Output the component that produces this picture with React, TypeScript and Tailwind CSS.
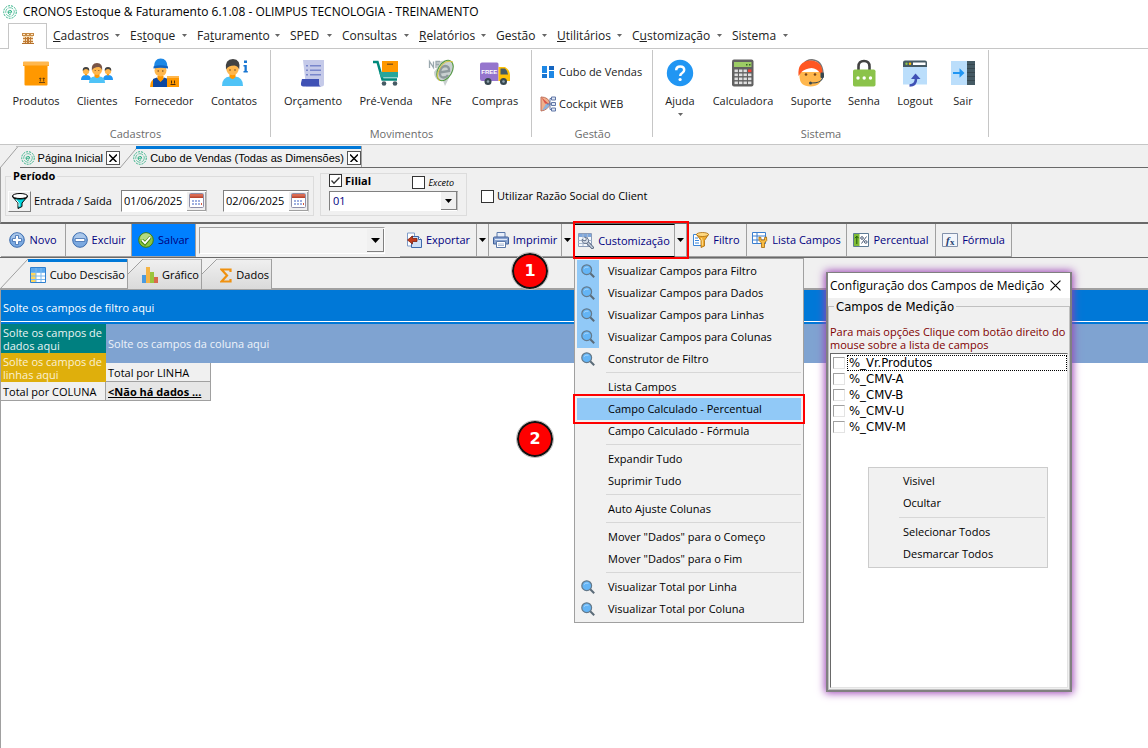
import type { ReactNode } from 'react';

const menus = [
  { pre: '', key: 'C', post: 'adastros', width: 'w-[77px]' },
  { pre: 'Es', key: 't', post: 'oque', width: 'w-[67px]' },
  { pre: 'Fa', key: 't', post: 'uramento', width: 'w-[93px]' },
  { pre: 'SPED', key: '', post: '', width: 'w-[52px]' },
  { pre: 'Consultas', key: '', post: '', width: 'w-[77px]' },
  { pre: '', key: 'R', post: 'elatórios', width: 'w-[77px]' },
  { pre: 'Gestão', key: '', post: '', width: 'w-[61px]' },
  { pre: '', key: 'U', post: 'tilitários', width: 'w-[75px]' },
  { pre: 'C', key: 'u', post: 'stomização', width: 'w-[100px]' },
  { pre: 'Sistema', key: '', post: '', width: 'w-[66px]' },
];

const customizeMenu = [
  [
    { label: 'Visualizar Campos para Filtro', icon: true, on: true },
    { label: 'Visualizar Campos para Dados', icon: true, on: true },
    { label: 'Visualizar Campos para Linhas', icon: true, on: true },
    { label: 'Visualizar Campos para Colunas', icon: true, on: true },
    { label: 'Construtor de Filtro', icon: true },
  ],
  [
    { label: 'Lista Campos' },
    { label: 'Campo Calculado - Percentual', active: true },
    { label: 'Campo Calculado - Fórmula' },
  ],
  [{ label: 'Expandir Tudo' }, { label: 'Suprimir Tudo' }],
  [{ label: 'Auto Ajuste Colunas' }],
  [{ label: 'Mover "Dados" para o Começo' }, { label: 'Mover "Dados" para o Fim' }],
  [
    { label: 'Visualizar Total por Linha', icon: true },
    { label: 'Visualizar Total por Coluna', icon: true },
  ],
] as { label: string; icon?: boolean; on?: boolean; active?: boolean }[][];

const measures = ['%_Vr.Produtos', '%_CMV-A', '%_CMV-B', '%_CMV-U', '%_CMV-M'];

/* ---------- icons ---------- */

function LogoIcon() {
  return (
    <svg viewBox="0 0 14 14" className="w-[14px] h-[14px] shrink-0" fill="none" stroke="#2fb085">
      <circle cx="7" cy="7" r="6.300" strokeWidth="1" strokeDasharray="2 1" />
      <circle cx="7" cy="7" r="4.300" strokeWidth=".7" strokeDasharray="5 1" />
      <path d="M5 7.200h3.800a1.900 1.900 0 1 0-.7 1.600" strokeWidth="1" />
    </svg>
  );
}

function Caret({ color = 'text-black', size = 'w-[7px] h-[4px]' }: { color?: string; size?: string }) {
  return (
    <svg viewBox="0 0 8 4" className={`${size} ${color} shrink-0`} preserveAspectRatio="none">
      <path d="M0 0h8L4 4z" fill="currentColor" />
    </svg>
  );
}

function HomeIcon() {
  return (
    <svg viewBox="0 0 12 11" className="w-[12px] h-[11px]">
      <path d="M0 0h12v3H0z" fill="#c68a45" />
      <path d="M1 3h10v8H1z" fill="#f3d9b1" />
      <path d="M1 1h2v1H1zM5 1h2v1H5zM9 1h2v1H9z" fill="#ffe9c9" />
      <path d="M1 5h10v1H1zM1 8h10v1H1zM3 4h1v7H3zM5 4h2v7H5zM8 4h1v7H8z" fill="#c07b35" />
      <path d="M0 10h12v1H0z" fill="#b4702c" />
    </svg>
  );
}

function BoxIcon() {
  return (
    <svg viewBox="0 0 28 28" className="w-7 h-7">
      <path d="M2.500 7h23v18.500a1 1 0 0 1-1 1h-21a1 1 0 0 1-1-1z" fill="#ff9800" />
      <path d="M1 3.500a1 1 0 0 1 1-1h24a1 1 0 0 1 1 1V7H1z" fill="#ffb74d" />
      <path d="M1 6h26v1H1z" fill="#ffa726" />
      <path d="M17 23.500h6M18.300 22.500v-3.500M21.700 22.500v-3.500M17.300 20l1-1.200 1 1.200M20.700 20l1-1.200 1 1.200" stroke="#5d3a10" strokeWidth=".9" fill="none" />
    </svg>
  );
}

function PeopleIcon() {
  return (
    <svg viewBox="0 0 32 28" className="w-8 h-7">
      {[5, 27].map((x) => (
        <g key={x}>
          <path d={`M${x - 5} 21q0-5 5-5t5 5z`} fill="#2196f3" />
          <circle cx={x} cy="12" r="3.200" fill="#ffb74d" />
          <path d={`M${x - 3.2} 12q-.5-4 3.200-4t3.200 4q-1.500-2-3.200-2t-3.200 2z`} fill="#424242" />
          <path d={`M${x - 1.5} 15h3l-1.500 2z`} fill="#ff9800" />
        </g>
      ))}
      <path d="M8 24q0-6 5.500-6.500h5q5.500.5 5.500 6.500z" fill="#4fc3f7" />
      <path d="M13.500 15h5v2.500q-2.500 3-5 0z" fill="#ff9800" />
      <circle cx="16" cy="11" r="5" fill="#ffb74d" />
      <path d="M10.800 11.500Q10 4 16 4t5.200 7.500Q20 8 17.500 8q-5 0-6.700 3.500z" fill="#795548" />
      <circle cx="14.200" cy="11.500" r=".6" fill="#784719" />
      <circle cx="17.800" cy="11.500" r=".6" fill="#784719" />
    </svg>
  );
}

function WorkerIcon() {
  return (
    <svg viewBox="0 0 30 30" className="w-[30px] h-[30px]">
      <path d="M1 29q0-8 7-9h7q7 1 7 9z" fill="#ff9800" />
      <path d="M4 21l4-1.500 3.500 4 3.500-4 4 1.500V29H4z" fill="#0d47a1" />
      <path d="M8.500 18h6v3l-3 3-3-3z" fill="#ff9800" />
      <circle cx="11.500" cy="12.500" r="6" fill="#ffb74d" />
      <path d="M5 9q0-8.500 6.700-8.500T18.500 9z" fill="#1e88e5" />
      <path d="M4.500 8.500q7-2.500 14.500 0v2q-7.500-1.500-14.500 0z" fill="#1565c0" />
      <circle cx="9.200" cy="13" r=".8" fill="#784719" />
      <circle cx="13.800" cy="13" r=".8" fill="#784719" />
      <path d="M18 18h12v11H18z" fill="#ff9800" />
      <path d="M18 18h12v2H18z" fill="#ffb74d" />
      <path d="M21.500 26.500h5M22.500 25.500v-3M25.500 25.500v-3" stroke="#4e2f0c" fill="none" />
    </svg>
  );
}

function ContactIcon() {
  return (
    <svg viewBox="0 0 30 30" className="w-[30px] h-[30px]">
      <path d="M3 28q0-9 8-9.500h5q8 .5 8 9.500z" fill="#4fc3f7" />
      <path d="M10.500 16h6v3q-3 4-6 0z" fill="#ff9800" />
      <circle cx="13.500" cy="11" r="6.200" fill="#ffb74d" />
      <path d="M7 11.500Q5.500 1 14 1q8 .5 6.200 10.500Q19 8 15.500 7.500 9 7.500 7 11.500z" fill="#424242" />
      <circle cx="11" cy="12" r=".8" fill="#784719" />
      <circle cx="16" cy="12" r=".8" fill="#784719" />
      <path d="M25 2.500h3v2.500h-3zM24.500 7h3.300v6h1v1.500h-4.300V13h1V8.500h-1z" fill="#1976d2" />
    </svg>
  );
}

function InvoiceIcon() {
  return (
    <svg viewBox="0 0 28 28" className="w-7 h-7">
      <path d="M4 1h21v24a2.500 2.500 0 0 1-2.500 2.500H7z" fill="#c5cae9" />
      <path d="M3 20h17v4.500q0 3 2.500 3H4.500Q1.500 27.500 2 24z" fill="#3f51b5" />
      <path d="M7 6h2v1.500H7zM7 10.500h2V12H7zM7 15h2v1.500H7zM11 6h11v1.500H11zM11 10.500h11V12H11zM11 15h11v1.500H11z" fill="#7986cb" />
    </svg>
  );
}

function CartIcon() {
  return (
    <svg viewBox="0 0 28 28" className="w-7 h-7">
      <path d="M10 2h16v12H10z" fill="#ff9800" />
      <path d="M15 4.500h6V6h-6z" fill="#8a5a1a" />
      <path d="M1 3h4.500l5 17.500H25" stroke="#00897b" strokeWidth="2.500" fill="none" />
      <path d="M7 13h19v5.500H9z" fill="#26a69a" />
      <circle cx="12" cy="24.500" r="2.300" fill="#455a64" />
      <circle cx="23" cy="24.500" r="2.300" fill="#455a64" />
    </svg>
  );
}

function NfeIcon() {
  return (
    <svg viewBox="0 0 28 28" className="w-7 h-7" fill="none">
      <path d="M8 3q10-3 16 0l2 4-1 6q-4 4-5 8l-3 6-2-5h-4q-5-3-5-9l3-4z" fill="#c9d0d0" />
      <path d="M1.500 9V2.500l4 6v-6M8 9V2.500h4M8 5.500h3" stroke="#9aa8ae" strokeWidth="1.300" />
      <path d="M11.500 13.500l9.500-1.500q.5-5-4-5-4 .5-5 5.500-.8 6 3.500 6 3 0 4.500-2.500" stroke="#8e999c" strokeWidth="2.400" />
      <ellipse cx="17" cy="11.500" rx="7" ry="11" transform="rotate(30 17 11.500)" stroke="#4f9a3d" strokeWidth="1" />
      <path d="M12 22Q7 18 12 9t13-6" stroke="#dcc73f" />
    </svg>
  );
}

function TruckIcon() {
  return (
    <svg viewBox="0 0 32 28" className="w-8 h-7">
      <path d="M1 5.500a2 2 0 0 1 2-2h15a1.500 1.500 0 0 1 1.500 1.500v17H3a2 2 0 0 1-2-2z" fill="#9575cd" />
      <path d="M19.500 8H26q5 3 5 8v6H19.500z" fill="#ffc107" />
      <path d="M21.500 9.500H26q3 2.500 3 6h-7.500z" fill="#455a64" />
      <circle cx="9" cy="22.500" r="3.500" fill="#37474f" />
      <circle cx="24.500" cy="22.500" r="3.500" fill="#37474f" />
      <circle cx="9" cy="22.500" r="1.300" fill="#90a4ae" />
      <circle cx="24.500" cy="22.500" r="1.300" fill="#90a4ae" />
      <text x="10.300" y="14.500" textAnchor="middle" fontSize="6" fontWeight="700" fill="#fff" fontFamily="Liberation Sans, sans-serif">FREE</text>
    </svg>
  );
}

function DashboardIcon() {
  return (
    <svg viewBox="0 0 12 12" className="w-[12px] h-[12px]">
      <path d="M0 0h5v7H0zM7 5h5v7H7z" fill="#1e88e5" />
      <path d="M7 0h5v4H7z" fill="#1565c0" />
      <path d="M0 8h5v4H0z" fill="#1976d2" />
    </svg>
  );
}

function CockpitIcon() {
  return (
    <svg viewBox="0 0 16 16" className="w-4 h-4">
      <path d="M1 1q8 0 9 7-2 6-9 7z" fill="#f0b08c" stroke="#c0705a" />
      <path d="M1.500 1.500L9 8l-4-.500z" fill="#d9534a" />
      <path d="M2 14.500L6 8h4q-2 5-8 6.500z" fill="#8fb2dc" />
      <path d="M7 8h3M10 2.500v11M10 2.500h1.500M10 8h1.500M10 13.500h1.500" stroke="#6076a6" fill="none" />
      <path d="M11.500 1h4v3h-4zM11.500 6.500h4v3h-4zM11.500 12h4v3h-4z" fill="#dfe7f5" stroke="#6076a6" />
    </svg>
  );
}

function HelpIcon() {
  return (
    <svg viewBox="0 0 28 28" className="w-7 h-7">
      <circle cx="14" cy="14" r="13.200" fill="#2196f3" />
      <path d="M10.200 11.200q0-3.800 4-3.800t4 3.600q0 1.700-2 3-2 1.200-2 3" stroke="#fff" strokeWidth="2.500" fill="none" />
      <circle cx="14.100" cy="20.500" r="1.600" fill="#fff" />
    </svg>
  );
}

function CalculatorIcon() {
  const rows = [12, 16, 20, 24];
  const cols = [5.5, 10, 14.5, 19];
  return (
    <svg viewBox="0 0 28 28" className="w-7 h-7">
      <rect x="3" y=".5" width="21.500" height="27" rx="2" fill="#616161" />
      <path d="M5 3h17.500v5H5z" fill="#9ccc65" />
      <path d="M17 5h1.500v1.500H17zM20 5h1.500v1.500H20z" fill="#33691e" />
      {rows.map((y) =>
        cols.map((x) => <rect key={`${x}-${y}`} x={x} y={y - 1.5} width="3.400" height="2.600" fill={x === 19 && y === 12 ? '#f44336' : '#e0e0e0'} />),
      )}
    </svg>
  );
}

function SupportIcon() {
  return (
    <svg viewBox="0 0 28 28" className="w-7 h-7">
      <path d="M7 5Q9 .8 15 .8 25 1.500 26 14" fill="none" stroke="#757575" strokeWidth="1.400" />
      <path d="M2.500 13v4q0 10.500 11 10.500T24.500 17v-4z" fill="#ffb74d" />
      <path d="M1.500 17Q0 2 13.500 1.500 26 2 25.500 15l-3-1.500q-2.500-4-8-4.500-6 .5-9.500 3.500z" fill="#ff5722" />
      <circle cx="9" cy="15.500" r="1.300" fill="#784719" />
      <circle cx="18" cy="15.500" r="1.300" fill="#784719" />
      <rect x="23.500" y="13.500" width="3.500" height="5.500" rx="1" fill="#37474f" />
      <path d="M25.500 19q-1 5-11 5" stroke="#37474f" strokeWidth="1.200" fill="none" />
      <circle cx="13.500" cy="24" r="1.500" fill="#37474f" />
    </svg>
  );
}

function LockIcon() {
  return (
    <svg viewBox="0 0 28 28" className="w-7 h-7">
      <path d="M8.500 12V7.500q0-5.500 5.500-5.500t5.500 5.500V12" fill="none" stroke="#424242" strokeWidth="2.600" />
      <rect x="3" y="10.500" width="22.500" height="17" rx="1.800" fill="#8bc34a" />
      <circle cx="8" cy="19" r="1.700" fill="#fff" />
      <circle cx="14.200" cy="19" r="1.700" fill="#fff" />
      <circle cx="20.500" cy="19" r="1.700" fill="#fff" />
    </svg>
  );
}

function LogoutIcon() {
  return (
    <svg viewBox="0 0 28 28" className="w-7 h-7">
      <path d="M2 7h24v18.500H2z" fill="#bbdefb" />
      <path d="M2 3.500a2 2 0 0 1 2-2h20a2 2 0 0 1 2 2V8H2z" fill="#455a64" />
      <rect x="12" y="3.500" width="12.500" height="2.500" fill="#fff" />
      <circle cx="5.500" cy="4.800" r="1.200" fill="#8bc34a" />
      <circle cx="9" cy="4.800" r="1.200" fill="#ffc107" />
      <path d="M8.500 26.500q6.500 0 6.500-7" fill="none" stroke="#3f51b5" strokeWidth="2.600" />
      <path d="M10 20l4.500-5.500L19.500 20z" fill="#3f51b5" />
    </svg>
  );
}

function ExitIcon() {
  return (
    <svg viewBox="0 0 28 28" className="w-7 h-7">
      <path d="M2 2h16v24H2z" fill="#bbdefb" />
      <path d="M18 2h8v24h-8z" fill="#455a64" />
      <path d="M18 5.500h8M18 9.500h8M18 13.500h8M18 17.500h8M18 21.500h8" stroke="#37474f" />
      <path d="M4 13h6.500V9.200l5 4.800-5 4.800V15H4z" fill="#2196f3" />
    </svg>
  );
}

function FunnelIcon() {
  return (
    <svg viewBox="0 0 16 16" className="w-4 h-4">
      <ellipse cx="8" cy="3" rx="7.500" ry="2.500" fill="#fff" stroke="#000" />
      <path d="M.5 3.500L6 10v5.500l4-2V10l5.500-6.500Q15 6 8 6T.5 3.500z" fill="#00d8e0" stroke="#000" />
      <path d="M4 6.500l3 4v3" stroke="#fff" fill="none" />
    </svg>
  );
}

function CalendarIcon() {
  return (
    <svg viewBox="0 0 15 15" className="w-[15px] h-[15px]">
      <rect x=".5" y=".5" width="14" height="14" rx="1" fill="#fff" stroke="#8f8fa8" />
      <path d="M1 1h13v4H1z" fill="#d96a52" />
      <path d="M1 3.500h13V5H1z" fill="#b9472f" />
      <path d="M3 7h2v2H3zM6 7h2v2H6zM9 7h2v2H9zM3 10h2v2H3zM6 10h2v2H6zM9 10h2v2H9z" fill="#9fb0e0" />
      <path d="M12 10h1v2h-1z" fill="#d4573d" />
    </svg>
  );
}

function RoundIcon({ kind }: { kind: 'plus' | 'minus' | 'check' }) {
  const green = kind === 'check';
  return (
    <svg viewBox="0 0 16 16" className="w-4 h-4 shrink-0">
      <circle cx="8" cy="8" r="7.300" fill={green ? '#8cc63f' : '#7ba9e0'} stroke={green ? '#3f7d12' : '#3c6cae'} />
      <path d="M2 7a6 6 0 0 1 12 0q-6 2-12 0z" fill="#fff" opacity=".35" />
      {kind === 'plus' && <path d="M6.500 3.500h3v3h3v3h-3v3h-3v-3h-3v-3h3z" fill="#fff" stroke="#3c6cae" strokeWidth=".8" />}
      {kind === 'minus' && <path d="M3.200 6.500h9.600v3H3.200z" fill="#fff" stroke="#3c6cae" strokeWidth=".8" />}
      {kind === 'check' && (
        <>
          <path d="M3.800 8.200l3.200 3.300 5.500-6.500" fill="none" stroke="#3f7d12" strokeWidth="3.400" />
          <path d="M4 8.200l3 3 5.200-6" fill="none" stroke="#fff" strokeWidth="1.800" />
        </>
      )}
    </svg>
  );
}

function ExportIcon() {
  return (
    <svg viewBox="0 0 16 16" className="w-4 h-4 shrink-0">
      <path d="M1.500 1h7v13h-7z" fill="#fff" stroke="#7f9cc9" />
      <path d="M5.500 4.500h7l3 3v8h-10z" fill="#cfe0f7" stroke="#3f69ab" />
      <path d="M12.500 4.500v3h3" fill="#fff" stroke="#3f69ab" />
      <path d="M1.500 8l5-4v2.500h4.500v3H6.500V12z" fill="#c33b1c" stroke="#7d1f0c" strokeWidth=".8" />
    </svg>
  );
}

function PrinterIcon() {
  return (
    <svg viewBox="0 0 16 16" className="w-4 h-4 shrink-0">
      <path d="M4 .500h8V6H4z" fill="#e9f0fb" stroke="#5b79aa" />
      <path d="M1.500 5h13q1 0 1 1v6H.500V6q0-1 1-1z" fill="#88a3d0" stroke="#40609a" />
      <path d="M2 7.500h12" stroke="#dfe8f8" />
      <path d="M3.500 9.500h9v6h-9z" fill="#fff" stroke="#5b79aa" />
      <path d="M5 12h6M5 13.500h6" stroke="#a9bad6" />
    </svg>
  );
}

function ToolTableIcon() {
  return (
    <svg viewBox="0 0 16 16" className="w-4 h-4 shrink-0">
      <path d="M.500 .500h13v13H.500z" fill="#f4f7fb" stroke="#8a9bb8" />
      <path d="M1 1h12v3H1z" fill="#7fa8dd" />
      <path d="M.500 7.500h13M.500 10.500h13M5 1v12M9.500 1v12" stroke="#a9b8cf" />
      <path d="M14.300 14.500L9 9" stroke="#4e5d76" strokeWidth="3.200" strokeLinecap="round" />
      <path d="M14.300 14.500L9 9" stroke="#c3cddd" strokeWidth="1.600" strokeLinecap="round" />
      <path d="M6.500 4l1.800 1.800-.5 1.700-1.900.3L4.200 6.200Q3.600 9.500 6 10.300q3 .8 4.500-1.300Q11.500 5 6.500 4z" fill="#d5dce8" stroke="#4e5d76" strokeWidth=".8" />
    </svg>
  );
}

function FilterTableIcon() {
  return (
    <svg viewBox="0 0 16 16" className="w-4 h-4 shrink-0">
      <path d="M.500 2.500h10v11H.500z" fill="#fff" stroke="#3b86d8" />
      <path d="M2 6h3M2 8.500h4M2 11h4" stroke="#3b86d8" />
      <path d="M3.500 2.500L8 8.500v7l3.500-1.500V8.500L15.500 2.500q-6 2.500-12 0z" fill="#f0ac2e" stroke="#a9690a" strokeWidth=".8" />
      <path d="M8.500 6l.8 3v4.500" stroke="#ffe095" fill="none" />
      <ellipse cx="9.500" cy="2.500" rx="6" ry="2" fill="#ffd980" stroke="#a9690a" strokeWidth=".8" />
    </svg>
  );
}

function FieldListIcon() {
  return (
    <svg viewBox="0 0 16 16" className="w-4 h-4 shrink-0">
      <path d="M.500 .500h13v11H.500z" fill="#fff" stroke="#3b7fd0" />
      <path d="M1 4h12M1 8h12M5 1v10" stroke="#3b7fd0" />
      <path d="M9.500 15.500v-4.500Q6 9 7 5l2 .5v2.500h3.500V5.500l2-.5Q16 9 12.500 11v4.500z" fill="#f6bd45" stroke="#a9690a" strokeWidth=".8" />
    </svg>
  );
}

function PercentIcon() {
  return (
    <svg viewBox="0 0 16 14" className="w-4 h-[14px] shrink-0">
      <path d="M.500 .500h15v13H.500z" fill="#fff" stroke="#5d7b95" />
      <path d="M1 1h5.500v12H1z" fill="#7fbb35" />
      <path d="M3.800 11V3.500M2 5.200l1.800-2 1.800 2" stroke="#1d5a08" fill="none" />
      <circle cx="9" cy="5" r="1.300" fill="none" stroke="#4a5a75" />
      <circle cx="12.800" cy="9" r="1.300" fill="none" stroke="#4a5a75" />
      <path d="M8.500 10.500l5-7" stroke="#4a5a75" />
    </svg>
  );
}

function FxIcon() {
  return (
    <svg viewBox="0 0 16 14" className="w-4 h-[14px] shrink-0">
      <path d="M.500 .500h15v13H.500z" fill="#f2f5fb" stroke="#8391ab" />
      <text x="4" y="10.500" fontSize="11" fontStyle="italic" fontWeight="700" fill="#24406f" fontFamily="Liberation Serif, serif">f</text>
      <text x="8" y="12" fontSize="9" fontWeight="700" fill="#24406f" fontFamily="Liberation Serif, serif">x</text>
    </svg>
  );
}

function GridIcon() {
  return (
    <svg viewBox="0 0 16 16" className="w-4 h-4 shrink-0">
      <path d="M.500 .500h15v15H.500z" fill="#fff" stroke="#2f80d0" />
      <path d="M1 1h14v4H1z" fill="#5aa8ee" />
      <path d="M1 6h5v9H1z" fill="#ffd65c" />
      <path d="M1 5.500h14M1 9h14M1 12.500h14M6 1v14M11 1v14" stroke="#7db9ee" />
    </svg>
  );
}

function ChartIcon() {
  return (
    <svg viewBox="0 0 16 16" className="w-4 h-4 shrink-0">
      <path d="M0 8h4v8H0z" fill="#4b9be0" />
      <path d="M4 0h4v16H4z" fill="#f5b445" />
      <path d="M8 5h4v11H8z" fill="#9cc43c" />
      <path d="M12 10h4v6h-4z" fill="#d9694d" />
    </svg>
  );
}

function SigmaIcon() {
  return (
    <svg viewBox="0 0 12 15" className="w-[12px] h-[15px] shrink-0">
      <path d="M10.500 4V1.500H1.500L7 7.500l-5.500 6h9V11" fill="none" stroke="#ef9110" strokeWidth="2.200" />
    </svg>
  );
}

function SearchIcon() {
  return (
    <svg viewBox="0 0 14 14" className="w-[14px] h-[14px]">
      <path d="M9 9l4.200 4.200" stroke="#5b6b78" strokeWidth="2" />
      <circle cx="5.700" cy="5.700" r="4.900" fill="#64b5f6" stroke="#64798a" strokeWidth="1.200" />
      <path d="M3 4.500Q4.500 2.500 7.500 3.200" stroke="#a9d8ff" fill="none" />
    </svg>
  );
}

function CloseIcon({ className }: { className: string }) {
  return (
    <svg viewBox="0 0 10 10" className={className} fill="none" stroke="#000">
      <path d="M.500 .500l9 9M9.500 .500l-9 9" />
    </svg>
  );
}

/* ---------- building blocks ---------- */

function RibbonItem({ icon, label, width, drop }: { icon: ReactNode; label: string; width: string; drop?: boolean }) {
  return (
    <button className={`${width} flex flex-col items-center shrink-0`}>
      <span className="h-[30px] flex items-center">{icon}</span>
      <span className="mt-[4px] leading-[18px] whitespace-nowrap">{label}</span>
      {drop && <span className="pt-[3px]"><Caret color="text-[#666]" size="w-[5px] h-[3px]" /></span>}
    </button>
  );
}

function RibbonGroup({ label, width, children }: { label: string; width: string; children: ReactNode }) {
  return (
    <section className={`${width} h-[92px] mt-px flex flex-col shrink-0 relative`}>
      <div className="flex-1 flex pt-[8px]">{children}</div>
      <h2 className="text-center text-[#6b6b6b] leading-[16px]">{label}</h2>
      <span className="absolute right-0 top-0 h-[87px] border-r border-[#c6c6c6]" />
    </section>
  );
}

function ToolButton({ icon, label, width, on }: { icon: ReactNode; label: string; width: string; on?: boolean }) {
  return (
    <button
      className={`${width} ${on ? 'bg-[#0080ff]' : 'bg-[#f0f0f0]'} h-[33px] flex items-center justify-center gap-[4px] shrink-0 border-r border-b border-[#a0a0a0] text-[#000080] whitespace-nowrap`}
    >
      {icon}
      {label}
    </button>
  );
}

function DropButton({ label }: { label: string }) {
  return (
    <button aria-label={label} className="w-[12px] h-[33px] flex items-center justify-center shrink-0 border-r border-b border-[#a0a0a0]">
      <Caret />
    </button>
  );
}

function DateField({ label, value }: { label: string; value: string }) {
  return (
    <div className="w-[86px] h-[22px] flex items-center justify-between bg-white border border-t-[#808080] border-l-[#808080] border-b-white border-r-[#c0c0c0]">
      <input aria-label={label} defaultValue={value} className="w-[62px] pl-[2px] bg-transparent outline-none" />
      <button aria-label="Calendário" className="w-[19px] h-[19px] flex items-center justify-center bg-[#f0f0f0] border-r border-b border-[#a0a0a0] shrink-0">
        <CalendarIcon />
      </button>
    </div>
  );
}

function Check({ id, checked }: { id: string; checked?: boolean }) {
  return (
    <span className="relative flex shrink-0">
      <input id={id} type="checkbox" defaultChecked={checked} className="peer appearance-none w-[13px] h-[13px] bg-white border border-[#333]" />
      <svg viewBox="0 0 13 13" className="hidden peer-checked:block absolute inset-0 pointer-events-none" fill="none" stroke="#333" strokeWidth="1.300">
        <path d="M2.500 6.500L5 9.200l5.500-5.700" />
      </svg>
    </span>
  );
}

function StepBadge({ n, place }: { n: number; place: string }) {
  return (
    <span className={`${place} absolute z-20 w-[36px] h-[36px] rounded-full bg-[#fe0000] border-2 border-[#111] outline-1 outline-[#bbb] flex items-center justify-center text-white text-[16px] font-bold font-['DejaVu_Sans',sans-serif]`}>
      {n}
    </span>
  );
}

function DocTab({ label, width, active }: { label: string; width: string; active?: boolean }) {
  return (
    <div className={`${width} relative h-[22px] flex items-center justify-end gap-[3px] font-['Liberation_Sans',sans-serif] text-[11px]`}>
      <svg viewBox="0 0 20 22" className="absolute left-0 top-0 w-[20px] h-[22px]" fill="none">
        <path d="M0 22L18 .500H20V22z" fill="#f0f0f0" />
        <path d="M0 22L18 .500H20" stroke="#a0a0a0" />
      </svg>
      <span className={`absolute left-[16px] right-0 top-0 ${active ? 'h-[3px] bg-[#0078d7]' : 'h-px bg-[#c0c0c0]'}`} />
      <span className="relative flex items-center gap-[3px] pt-px whitespace-nowrap"><LogoIcon />{label}</span>
      <button aria-label={`Fechar ${label}`} className="relative mt-px w-[14px] h-[14px] flex items-center justify-center bg-white border border-[#555]">
        <svg viewBox="0 0 8 8" className="w-2 h-2"><path d="M0 .500l7.500 7.500M8 .500L.500 8" stroke="#000" strokeWidth="1.500" /></svg>
      </button>
    </div>
  );
}

function ViewTab({ icon, label, width, active }: { icon: ReactNode; label: string; width: string; active?: boolean }) {
  return (
    <button className={`${width} relative h-[30px] flex items-center justify-end gap-[4px] pt-[2px] pr-[2px] border-r border-[#a0a0a0] whitespace-nowrap ${active ? '' : 'bg-linear-to-b from-[#f0f0f0] to-[#dadada]'}`}>
      <svg viewBox="0 0 30 30" preserveAspectRatio="none" className={`absolute left-0 top-0 h-[30px] ${active ? 'w-[28px]' : 'w-[15px]'}`} fill="none">
        <path d={active ? 'M0 0H30L0 30z' : 'M0 0H30L0 15z'} fill="#f0f0f0" />
        <path d={active ? 'M0 30L30 0' : 'M0 15L30 0'} stroke="#a0a0a0" vectorEffect="non-scaling-stroke" />
      </svg>
      <span className={`absolute right-0 top-0 ${active ? 'left-[28px] h-[3px] bg-[#0078d7]' : 'left-[15px] h-px bg-[#c0c0c0]'}`} />
      {icon}
      {label}
    </button>
  );
}

function CustomizeMenu() {
  return (
    <ul role="menu" className="absolute z-10 left-0 top-[34px] w-[230px] pt-px pb-[2px] px-[2px] bg-[#f1f1f1] border border-[#a0a0a0] text-black">
      {customizeMenu.map((group, i) => (
        <li key={i}>
          {i > 0 && <hr className="ml-[29px] mt-[2px] mb-[3px] border-[#d7d7d7]" />}
          {group.map((item) => (
            <button
              key={item.label}
              role="menuitem"
              className={`w-full h-[22px] flex items-center text-left whitespace-nowrap ${item.active ? 'bg-[#91c9f7] outline-2 outline-offset-[2px] outline-[#fe0000]' : ''}`}
            >
              <span className={`w-[22px] h-[22px] mr-[9px] flex items-center justify-center shrink-0 ${item.on ? 'bg-[#91c9f7]' : ''}`}>
                {item.icon && <SearchIcon />}
              </span>
              {item.label}
            </button>
          ))}
        </li>
      ))}
    </ul>
  );
}

function MeasureDialog() {
  return (
    <div role="dialog" aria-label="Configuração dos Campos de Medição" className="absolute z-10 left-[826px] top-[272px] w-[246px] h-[420px] flex flex-col bg-[#f0f0f0] border-2 border-t border-[#808080] shadow-[0_0_8px_1px_#9b3fb5]">
      <div className="h-[25px] flex items-center justify-between bg-white pl-[2px] pr-[9px]">
        <span className="whitespace-nowrap text-[12px]">Configuração dos Campos de Medição</span>
        <button aria-label="Fechar"><CloseIcon className="w-[11px] h-[11px]" /></button>
      </div>
      <fieldset className="flex-1 min-w-0 flex flex-col border border-[#c0c0c0] px-px pb-px">
        <legend className="ml-[4px] px-[2px] text-[13px] leading-[17px] font-['DejaVu_Sans_Condensed','DejaVu_Sans',sans-serif]">Campos de Medição</legend>
        <p className="pt-[10px] pb-[2px] leading-[13px] text-[#800000] whitespace-nowrap">
          Para mais opções Clique com botão direito do<br />mouse sobre a lista de campos
        </p>
        <div className="relative flex-1 pt-px bg-white border border-t-[#696969] border-l-[#696969] border-b-[#e3e3e3] border-r-[#e3e3e3] font-['DejaVu_Sans_Condensed','DejaVu_Sans',sans-serif]">
          {measures.map((m, i) => (
            <label key={m} className="h-[16px] flex items-center text-[13px]">
              <input type="checkbox" className="appearance-none w-[12px] h-[12px] mx-[2px] bg-white border border-[#e3e3e3] border-t-[#a0a0a0] border-l-[#a0a0a0] shrink-0" />
              <span className={`flex-1 h-[16px] pl-px border border-dotted leading-[14px] ${i === 0 ? 'border-black' : 'border-transparent'}`}>{m}</span>
            </label>
          ))}
          <ul role="menu" className="absolute left-[37px] top-[113px] w-[180px] py-[2px] px-[2px] bg-[#f1f1f1] border border-[#ccc] font-['Open_Sans','Noto_Sans',sans-serif]">
            {['Visivel', 'Ocultar', '', 'Selecionar Todos', 'Desmarcar Todos'].map((label) =>
              label ? (
                <li key={label}>
                  <button role="menuitem" className="w-full h-[22px] pl-[32px] text-left">{label}</button>
                </li>
              ) : (
                <li key="sep" className="ml-[28px] my-[3px] border-t border-[#d7d7d7]" />
              ),
            )}
          </ul>
        </div>
      </fieldset>
    </div>
  );
}

export default function App() {
  return (
    <div className="relative min-h-screen flex flex-col bg-white overflow-hidden text-[11px] leading-[16px] text-black font-['Open_Sans','Noto_Sans',sans-serif]">
      <header className="h-[23px] flex items-center gap-[6px] pl-[3px]">
        <LogoIcon />
        <h1 className="whitespace-nowrap text-[12px]">CRONOS Estoque &amp; Faturamento 6.1.08 - OLIMPUS TECNOLOGIA - TREINAMENTO</h1>
      </header>

      <nav className="h-[26px] flex text-[12px] text-[#222]">
        <span className="w-[8px] border-b border-[#c6c6c6]" />
        <button aria-label="Início" className="w-[39px] flex items-center justify-center pt-[4px] border border-b-0 border-[#c6c6c6]"><HomeIcon /></button>
        <div className="flex-1 flex items-center pl-[6px] border-b border-[#c6c6c6]">
          {menus.map((m) => (
            <button key={m.pre + m.key + m.post} className={`${m.width} flex items-center justify-between pr-[10px] whitespace-nowrap shrink-0`}>
              <span>{m.pre}<u>{m.key}</u>{m.post}</span>
              <Caret color="text-[#666]" size="w-[5px] h-[3px]" />
            </button>
          ))}
        </div>
      </nav>

      <div className="h-[96px] flex border-b border-[#c6c6c6] text-[#222]">
        <RibbonGroup label="Cadastros" width="w-[271px]">
          <span className="w-[6px]" />
          <RibbonItem icon={<BoxIcon />} label="Produtos" width="w-[60px]" />
          <RibbonItem icon={<PeopleIcon />} label="Clientes" width="w-[62px]" />
          <RibbonItem icon={<WorkerIcon />} label="Fornecedor" width="w-[72px]" />
          <RibbonItem icon={<ContactIcon />} label="Contatos" width="w-[68px]" />
        </RibbonGroup>
        <RibbonGroup label="Movimentos" width="w-[261px]">
          <span className="w-[6px]" />
          <RibbonItem icon={<InvoiceIcon />} label="Orçamento" width="w-[72px]" />
          <RibbonItem icon={<CartIcon />} label="Pré-Venda" width="w-[74px]" />
          <RibbonItem icon={<NfeIcon />} label="NFe" width="w-[37px]" />
          <RibbonItem icon={<TruckIcon />} label="Compras" width="w-[70px]" />
        </RibbonGroup>
        <RibbonGroup label="Gestão" width="w-[121px]">
          <div className="flex flex-col gap-[16px] pt-[6px] pl-[8px]">
            <button className="flex items-center gap-[3px] whitespace-nowrap"><span className="w-4 flex justify-center"><DashboardIcon /></span>Cubo de Vendas</button>
            <button className="flex items-center gap-[3px] whitespace-nowrap"><CockpitIcon />Cockpit WEB</button>
          </div>
        </RibbonGroup>
        <RibbonGroup label="Sistema" width="w-[336px]">
          <span className="w-px" />
          <RibbonItem icon={<HelpIcon />} label="Ajuda" width="w-[52px]" drop />
          <RibbonItem icon={<CalculatorIcon />} label="Calculadora" width="w-[74px]" />
          <RibbonItem icon={<SupportIcon />} label="Suporte" width="w-[62px]" />
          <RibbonItem icon={<LockIcon />} label="Senha" width="w-[44px]" />
          <RibbonItem icon={<LogoutIcon />} label="Logout" width="w-[58px]" />
          <RibbonItem icon={<ExitIcon />} label="Sair" width="w-[38px]" />
        </RibbonGroup>
      </div>

      <main className="flex-1 flex flex-col">
        <div className="h-[23px] flex items-start bg-[#f0f0f0] border-b border-[#696969] pt-px">
          <DocTab label="Página Inicial" width="w-[120px]" />
          <DocTab label="Cubo de Vendas (Todas as Dimensões)" width="w-[241px]" active />
          <span className="h-[21px] border-r border-[#a0a0a0]" />
        </div>

        <div className="h-[56px] flex items-start bg-[#f0f0f0] border-b-2 border-[#696969] border-l border-l-[#a0a0a0] pl-[4px]">
          <fieldset className="w-[309px] h-[48px] flex border border-[#dcdcdc] px-[2px]">
            <legend className="ml-[3px] px-[2px] font-bold">Período</legend>
            <div className="flex items-center h-[30px] pt-[4px]">
              <button aria-label="Filtrar período" className="w-[23px] h-[21px] flex items-center justify-center border-r border-b border-[#808080] border-t border-t-white border-l border-l-white"><FunnelIcon /></button>
              <span className="w-[90px] pl-[3px] whitespace-nowrap">Entrada / Saída</span>
              <DateField label="Entrada" value="01/06/2025" />
              <span className="w-[16px]" />
              <DateField label="Saída" value="02/06/2025" />
            </div>
          </fieldset>
          <fieldset className="w-[147px] h-[43px] ml-[6px] mt-[5px] border border-[#dcdcdc] px-[8px]">
            <div className="h-[17px] flex items-center justify-between">
              <label htmlFor="filial" className="flex items-center gap-[3px] pb-[4px] font-bold"><Check id="filial" checked />Filial</label>
              <label htmlFor="exceto" className="flex items-center gap-[3px] mr-[4px] text-[9px] italic"><Check id="exceto" />Exceto</label>
            </div>
            <div className="relative h-[20px] border border-[#808080] border-b-white border-r-[#c0c0c0] bg-white">
              <select aria-label="Filial" defaultValue="01" className="w-full h-full pl-[3px] appearance-none text-[#000080] outline-none">
                <option>01</option>
              </select>
              <span className="absolute right-0 top-0 w-[16px] h-[18px] flex items-center justify-center bg-[#f0f0f0] border-r border-b border-[#808080] pointer-events-none"><Caret /></span>
            </div>
          </fieldset>
          <label htmlFor="razao" className="flex items-center gap-[3px] ml-[14px] mt-[20px] whitespace-nowrap"><Check id="razao" />Utilizar Razão Social do Client</label>
        </div>

        <div className="relative h-[34px] flex items-start bg-[#f0f0f0] border-b border-[#696969] pl-px">
          <ToolButton icon={<RoundIcon kind="plus" />} label="Novo" width="w-[65px]" />
          <ToolButton icon={<RoundIcon kind="minus" />} label="Excluir" width="w-[66px]" />
          <ToolButton icon={<RoundIcon kind="check" />} label="Salvar" width="w-[64px]" on />
          <div className="relative w-[186px] h-[27px] ml-[3px] mr-[15px] mt-[3px] border border-[#a0a0a0] border-r-white border-b-white bg-[#f4f4f4] shrink-0">
            <select aria-label="Visão" className="w-full h-full appearance-none outline-none"><option></option></select>
            <span className="absolute right-0 top-px w-[17px] h-[23px] flex items-center justify-center bg-[#f0f0f0] border-r border-b border-[#808080] pointer-events-none"><Caret size="w-[9px] h-[5px]" /></span>
          </div>
          <ToolButton icon={<ExportIcon />} label="Exportar" width="w-[77px]" />
          <DropButton label="Opções de exportação" />
          <ToolButton icon={<PrinterIcon />} label="Imprimir" width="w-[73px]" />
          <DropButton label="Opções de impressão" />
          <div className="relative flex shrink-0">
            <ToolButton icon={<ToolTableIcon />} label="Customização" width="w-[101px] border-t border-t-black border-b-black" />
            <DropButton label="Opções de customização" />
            <span className="absolute -left-px -top-[3px] w-[116px] h-[38px] border-2 border-[#fe0000] z-20 pointer-events-none" />
            <CustomizeMenu />
            <StepBadge n={1} place="-left-[62px] top-[29px]" />
            <StepBadge n={2} place="-left-[57px] top-[197px]" />
          </div>
          <ToolButton icon={<FilterTableIcon />} label="Filtro" width="w-[60px]" />
          <ToolButton icon={<FieldListIcon />} label="Lista Campos" width="w-[100px]" />
          <ToolButton icon={<PercentIcon />} label="Percentual" width="w-[89px]" />
          <ToolButton icon={<FxIcon />} label="Fórmula" width="w-[76px]" />
        </div>

        <div className="h-[32px] flex items-start bg-[#f0f0f0] border-b-2 border-[#a0a0a0] pt-px">
          <ViewTab icon={<GridIcon />} label="Cubo Descisão" width="w-[128px]" active />
          <ViewTab icon={<ChartIcon />} label="Gráfico" width="w-[74px]" />
          <ViewTab icon={<SigmaIcon />} label="Dados" width="w-[70px]" />
        </div>

        <div className="flex-1 border-l border-[#a0a0a0] bg-white">
          <div className="h-[34px] flex items-center bg-[#0078d7] text-white pt-[3px] pl-[2px] border-b-2 border-[#0078d7] shadow-[inset_0_-1px_0_#fff]">
            Solte os campos de filtro aqui
          </div>
          <div className="flex items-start">
            <div className="w-[105px] shrink-0 leading-[13px]">
              <p className="h-[29px] pl-[2px] pt-[2px] bg-[#008080] text-[#e8f4f4] whitespace-nowrap">Solte os campos de<br />dados aqui</p>
              <p className="h-[29px] pl-[2px] pt-[2px] bg-[#dfaf0c] text-[#fbf1d2] whitespace-nowrap">Solte os campos de<br />linhas aqui</p>
              <p className="h-[19px] pl-[2px] leading-[19px] bg-[#f0f0f0] border-b border-r border-[#a0a0a0] whitespace-nowrap">Total por COLUNA</p>
            </div>
            <div className="flex-1">
              <p className="h-[39px] pl-[2px] leading-[40px] bg-[#7fa3d1] text-[#eef3fa]">Solte os campos da coluna aqui</p>
              <p className="w-[105px] h-[19px] pl-[2px] leading-[19px] bg-[#f0f0f0] border-b border-r border-[#a0a0a0]">Total por LINHA</p>
              <p className="w-[105px] h-[19px] pl-[2px] leading-[19px] bg-[#e6e6e6] border-b border-r border-[#a0a0a0] whitespace-nowrap"><b className="underline">&lt;Não há dados ...</b></p>
            </div>
          </div>
        </div>
      </main>

      <MeasureDialog />
    </div>
  );
}
